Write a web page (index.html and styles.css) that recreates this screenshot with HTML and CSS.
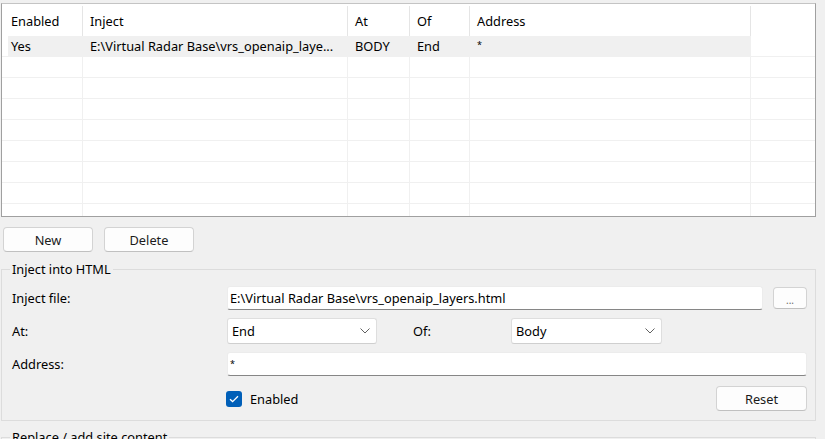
FILE: index.html
```html
<!DOCTYPE html>
<html>
<head>
<meta charset="utf-8">
<link rel="stylesheet" href="styles.css">
</head>
<body>
<div class="list">
  <div class="row head">
    <div class="cell first">Enabled</div>
    <div class="cell">Inject</div>
    <div class="cell">At</div>
    <div class="cell">Of</div>
    <div class="cell">Address</div>
    <div class="cell blank"></div>
  </div>
  <div class="row data sel">
    <div class="cell first">Yes</div>
    <div class="cell">E:\Virtual Radar Base\vrs_openaip_laye...</div>
    <div class="cell">BODY</div>
    <div class="cell">End</div>
    <div class="cell"><span class="ast">*</span></div>
    <div class="cell blank"></div>
  </div>
  <div class="row data"><div class="cell"></div><div class="cell"></div><div class="cell"></div><div class="cell"></div><div class="cell"></div><div class="cell blank"></div></div>
  <div class="row data"><div class="cell"></div><div class="cell"></div><div class="cell"></div><div class="cell"></div><div class="cell"></div><div class="cell blank"></div></div>
  <div class="row data"><div class="cell"></div><div class="cell"></div><div class="cell"></div><div class="cell"></div><div class="cell"></div><div class="cell blank"></div></div>
  <div class="row data"><div class="cell"></div><div class="cell"></div><div class="cell"></div><div class="cell"></div><div class="cell"></div><div class="cell blank"></div></div>
  <div class="row data"><div class="cell"></div><div class="cell"></div><div class="cell"></div><div class="cell"></div><div class="cell"></div><div class="cell blank"></div></div>
  <div class="row data"><div class="cell"></div><div class="cell"></div><div class="cell"></div><div class="cell"></div><div class="cell"></div><div class="cell blank"></div></div>
  <div class="row data"><div class="cell"></div><div class="cell"></div><div class="cell"></div><div class="cell"></div><div class="cell"></div><div class="cell blank"></div></div>
  <div class="row data"><div class="cell"></div><div class="cell"></div><div class="cell"></div><div class="cell"></div><div class="cell"></div><div class="cell blank"></div></div>
</div>

<div class="actions">
  <button class="btn wide">New</button>
  <button class="btn wide">Delete</button>
</div>

<fieldset class="group">
  <legend>Inject into HTML</legend>
  <div class="frow r1">
    <span class="flabel">Inject file:</span>
    <div class="tb grow">E:\Virtual Radar Base\vrs_openaip_layers.html</div>
    <button class="btn browse">...</button>
  </div>
  <div class="frow r2">
    <span class="flabel">At:</span>
    <div class="cb at"><span>End</span><svg width="10" height="6" viewBox="0 0 10 6"><path d="M0.5 0.5 L5 5 L9.5 0.5" fill="none" stroke="#616161" stroke-width="1"/></svg></div>
    <span class="oflabel">Of:</span>
    <div class="cb of"><span>Body</span><svg width="10" height="6" viewBox="0 0 10 6"><path d="M0.5 0.5 L5 5 L9.5 0.5" fill="none" stroke="#616161" stroke-width="1"/></svg></div>
  </div>
  <div class="frow r3">
    <span class="flabel">Address:</span>
    <div class="tb grow"><span class="ast">*</span></div>
  </div>
  <div class="frow r4">
    <span class="flabel"></span>
    <span class="chk"><svg width="10" height="8" viewBox="0 0 10 8"><path d="M1 4.2 L3.6 6.6 L9 1.2" fill="none" stroke="#fff" stroke-width="1.3"/></svg></span>
    <span class="chklabel">Enabled</span>
    <button class="btn reset">Reset</button>
  </div>
</fieldset>

<fieldset class="group next">
  <legend>Replace / add site content</legend>
</fieldset>
</body>
</html>
```
FILE: styles.css
```css
html, body {
  margin: 0;
  background: #f0f0f0;
}
body {
  width: 825px;
  height: 439px;
  overflow: hidden;
  font: 12.8px/16px "Noto Sans", "Liberation Sans", sans-serif;
  color: #000;
}

.ast {
  font-size: 9px;
  vertical-align: 3px;
  line-height: 10px;
}

.list {
  box-sizing: border-box;
  margin: 3px 9px 0 1px;
  height: 214px;
  border: 1px solid #a0a0a0;
  border-top-color: #c4c4c4;
  background: #fff;
  overflow: hidden;
}
.row {
  display: grid;
  grid-template-columns: 81px 265px 62px 60px 281px 1fr;
}
.cell {
  border-right: 1px solid #f0f0f0;
  padding-left: 7px;
  white-space: nowrap;
  overflow: hidden;
}
.cell.first { padding-left: 9px; }
.cell.blank { border-right: none; }

.head { height: 32px; }
.head .cell {
  display: flex;
  align-items: center;
  border-right-color: #e5e5e5;
  margin-top: 2px;
}
.head .cell.blank { border-right: none; }

.data {
  box-sizing: border-box;
  height: 21px;
  border-bottom: 1px solid #f0f0f0;
}
.data .cell { line-height: 20px; }
.sel {
  background: #f0f0f0;
  box-shadow: inset 6px 0 0 #fff;
}
.sel .cell.blank { background: #fff; }

.actions {
  display: flex;
  gap: 11px;
  margin: 10px 0 0 3px;
}
.btn {
  box-sizing: border-box;
  font: inherit;
  color: #1b1b1b;
  background: #fdfdfd;
  border: 1px solid #d3d3d3;
  border-bottom-color: #c0c0c0;
  border-radius: 4px;
  padding: 0;
}
.btn.wide { width: 90px; height: 25px; }

.group {
  border: 1px solid #dcdcdc;
  margin: 9px 9px 0 1px;
  padding: 9px 8px 7px 10px;
  min-width: 0;
}
.group legend {
  padding: 0 2px;
  margin-left: -2px;
  line-height: 16px;
}
.frow {
  display: flex;
  align-items: center;
}
.frow + .frow { margin-top: 8px; }
.r1, .r3 { height: 24px; }
.r2 { height: 26px; }
.r4 { height: 29px; }
.flabel {
  width: 215px;
  flex: none;
}
.tb {
  box-sizing: border-box;
  height: 24px;
  background: #fff;
  border: 1px solid #ececec;
  border-bottom-color: #868686;
  border-radius: 3px;
  padding: 0 2px;
  display: flex;
  align-items: center;
  white-space: nowrap;
}
.grow { flex: 1; }
.btn.browse {
  width: 34px;
  height: 22px;
  margin-left: 10px;
  font-size: 10px;
  color: #6a6a6a;
  padding-top: 4px;
}
.cb {
  box-sizing: border-box;
  height: 26px;
  background: #fff;
  border: 1px solid #dedede;
  border-bottom-color: #cfcfcf;
  border-radius: 3px;
  display: flex;
  align-items: center;
  justify-content: space-between;
  padding: 0 6px 0 4px;
}
.cb.at { width: 150px; }
.cb.of { width: 151px; }
.oflabel {
  box-sizing: border-box;
  width: 134px;
  padding-left: 36px;
}
.chk {
  width: 16px;
  height: 16px;
  margin-left: -1px;
  background: #005fb8;
  border-radius: 3px;
  display: flex;
  align-items: center;
  justify-content: center;
}
.chklabel { margin-left: 8px; }
.btn.reset {
  width: 91px;
  height: 25px;
  margin-left: auto;
}
.group.next {
  margin-top: 8px;
  height: 60px;
}
```
